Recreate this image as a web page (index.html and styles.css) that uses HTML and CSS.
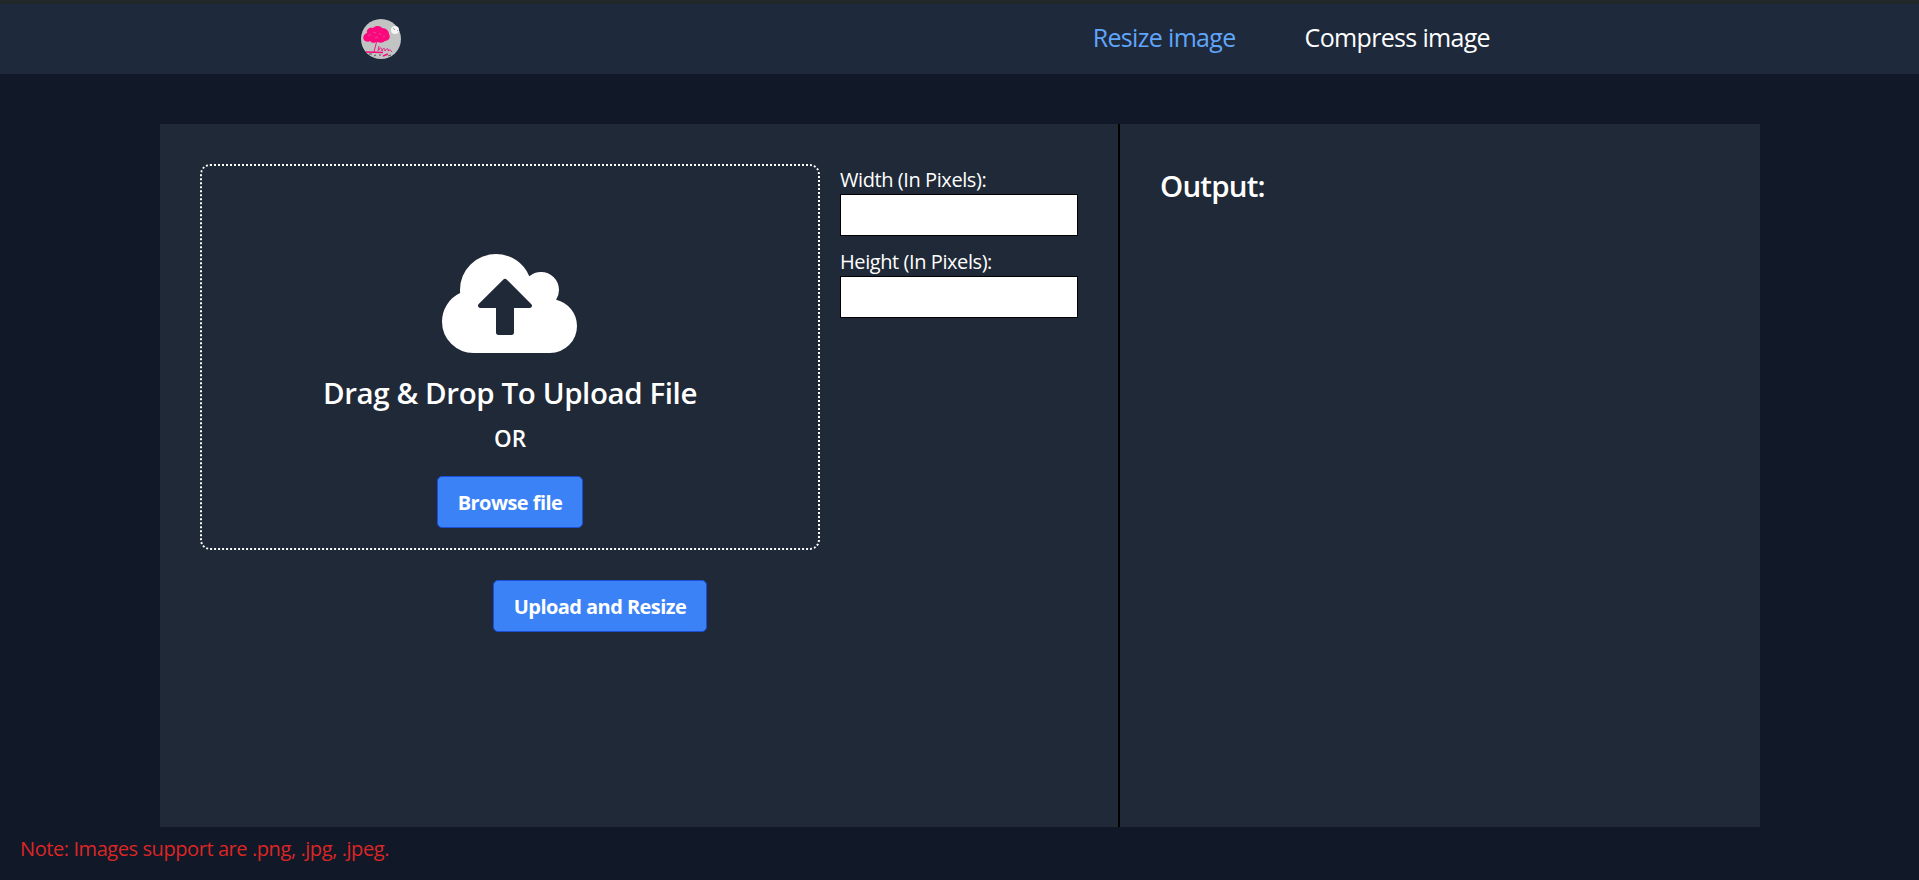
FILE: index.html
```html
<!DOCTYPE html>
<html lang="en">
<head>
<meta charset="utf-8">
<title>Resize image</title>
<link rel="stylesheet" href="styles.css">
</head>
<body>
<header class="navbar">
  <a class="logo" href="#" aria-label="Home">
    <svg viewBox="0 0 40 40" width="40" height="40">
      <circle cx="20" cy="20" r="20" fill="#c2c3c3"/>
      <path d="M4 22C1 20 2 15 6 14C5 10 9 8 12 9C15 6 20 7 21 9C25 9 28 12 28 15C30 18 28 22 24 22C21 25 17 23 15 23C12 25 10 23 9 22C8 23 6 23 4 22Z" fill="#fb087c"/>
      <path d="M7 17l3-2M12 13l3 1M18 14l2 2M14 19l3-1M22 18l2-1" stroke="#d84d91" stroke-width="1"/>
      <path d="M16 21C15 25 14 29 13 33M18 27L17 32M18 31C19 28 21 28 21 32C22 29 24 28 24 32C26 29 28 29 27 32C29 31 29 30 31 33" fill="none" stroke="#ee1680" stroke-width="1"/>
      <path d="M5 33L22 33.500M22 37L27 35" stroke="#fb087c" stroke-width="1.600"/>
      <path d="M8 35h3M13 37l2-1M18 36h2M27 37l3-1" stroke="#555" stroke-width="1"/>
      <circle cx="34" cy="11" r="4" fill="#f5f5f5"/>
      <path d="M32 9l2 2M36 11l1 1" stroke="#aaa" stroke-width="1"/>
    </svg>
  </a>
  <nav class="links">
    <a class="link active" href="#">Resize image</a>
    <a class="link" href="#">Compress image</a>
  </nav>
</header>
<main class="panel">
  <section class="editor">
    <div class="form-row">
      <div class="dropzone">
        <svg class="cloud" viewBox="0 128 1920 1408" width="135" height="99"><path fill="currentColor" d="M1280 864q0-14-9-23l-352-352q-9-9-23-9t-23 9l-351 351q-10 12-10 24 0 14 9 23t23 9h224v352q0 13 9.500 22.500t22.500 9.500h192q13 0 22.500-9.500t9.500-22.500v-352h224q13 0 22.500-9.500t9.500-22.500zm640 288q0 159-112.500 271.500t-271.500 112.500h-1088q-185 0-316.500-131.500t-131.500-316.500q0-130 70-240t188-165q-2-30-2-43 0-212 150-362t362-150q156 0 285.500 87t188.500 231q71-62 166-62 106 0 181 75t75 181q0 76-41 138 130 31 213.500 135.500t83.500 238.500z"/></svg>
        <h2 class="drop-title">Drag &amp; Drop To Upload File</h2>
        <p class="or">OR</p>
        <button class="btn browse">Browse file</button>
      </div>
      <div class="fields">
        <label class="field">Width (In Pixels):<input class="input" type="text"></label>
        <label class="field">Height (In Pixels):<input class="input" type="text"></label>
      </div>
    </div>
    <button class="btn upload">Upload and Resize</button>
  </section>
  <section class="output">
    <h2 class="output-title">Output:</h2>
  </section>
</main>
<p class="note">Note: Images support are .png, .jpg, .jpeg.</p>
</body>
</html>
```
FILE: styles.css
```css
* {
  box-sizing: border-box;
}

body {
  margin: 0;
  height: 880px;
  overflow: hidden;
  background: #111827;
  color: #fff;
  font-family: "Open Sans", "Noto Sans", sans-serif;
  font-size: 20px;
  line-height: 30px;
  letter-spacing: -0.42px;
}

h2,
p {
  margin: 0;
}

.navbar {
  display: flex;
  justify-content: space-between;
  height: 74px;
  padding: 15px 429px 0 361px;
  border-top: 4px solid #212829;
  background: #1e293b;
}

.logo,
.cloud {
  display: block;
}

.logo {
  height: 40px;
}

.cloud {
  margin-right: 1px;
}

.links {
  display: flex;
  gap: 69px;
}

.link {
  color: #fff;
  font-size: 25px;
  line-height: 36px;
  letter-spacing: -0.67px;
  text-decoration: none;
}

.active {
  color: #60a5fa;
}

.panel {
  display: flex;
  width: 1600px;
  height: 703px;
  margin: 50px auto 0 160px;
  background: #1f2937;
}

.editor {
  display: flex;
  flex-direction: column;
  align-items: center;
  width: 960px;
  padding: 40px;
  border-right: 2px solid #000;
}

.form-row {
  display: flex;
  gap: 20px;
  width: 100%;
}

.dropzone {
  display: flex;
  flex-direction: column;
  align-items: center;
  width: 620px;
  height: 386px;
  padding-top: 88px;
  border: 2px dotted #fff;
  border-radius: 10px;
}

.drop-title {
  margin-top: 20px;
  font-size: 29.5px;
  font-weight: 600;
  line-height: 40px;
  letter-spacing: -0.4px;
}

.or {
  margin: 11px 0 22px;
  font-size: 22.5px;
  font-weight: 600;
  letter-spacing: 0;
}

.btn {
  height: 52px;
  padding: 2px 0 0;
  border: 1px solid #1d4ed8;
  border-radius: 5px;
  background: #3b82f6;
  color: #fff;
  font: 700 20px/30px "Open Sans", "Noto Sans", sans-serif;
  letter-spacing: -0.56px;
  white-space: nowrap;
}

.browse {
  width: 146px;
}

.upload {
  width: 214px;
  margin: 30px 78px 0 0;
}

.fields {
  display: flex;
  flex: 1;
  flex-direction: column;
  gap: 10px;
}

.field {
  display: block;
  height: 72px;
  line-height: 32px;
}

.input {
  display: block;
  width: 100%;
  height: 42px;
  margin-top: -2px;
  border: 1px solid #000;
  background: #fff;
}

.output {
  padding: 40px;
}

.output-title {
  font-size: 29.5px;
  font-weight: 600;
  line-height: 43px;
  letter-spacing: -0.8px;
}

.note {
  margin: 7px 0 0 20px;
  color: #dc2626;
}
```
